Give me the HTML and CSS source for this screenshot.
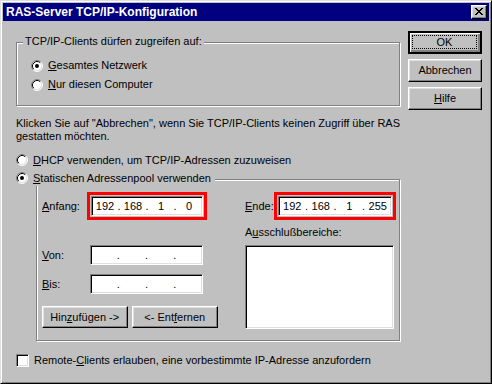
FILE: index.html
```html
<!DOCTYPE html>
<html lang="de">
<head>
<meta charset="utf-8">
<title>RAS-Server TCP/IP-Konfiguration</title>
<link rel="stylesheet" href="styles.css">
</head>
<body>
<div class="window">
  <div class="titlebar">
    <span class="title">RAS-Server TCP/IP-Konfiguration</span>
    <button class="btn close" aria-label="Schließen">
      <svg width="8" height="7" viewBox="0 0 8 7" shape-rendering="crispEdges">
        <path fill="#000" d="M0 0h2v1H0zM6 0h2v1H6zM1 1h2v1H1zM5 1h2v1H5zM2 2h4v1H2zM3 3h2v1H3zM2 4h4v1H2zM1 5h2v1H1zM5 5h2v1H5zM0 6h2v1H0zM6 6h2v1H6z"/>
      </svg>
    </button>
  </div>
  <div class="content">
    <div class="toprow">
      <div class="group group1">
        <span class="legend">TCP/IP-Clients dürfen zugreifen auf:</span>
        <div class="opt">
          <svg class="radio" width="12" height="12" viewBox="0 0 12 12"><circle cx="6" cy="6" r="5" fill="#fff"/><path d="M2.11 9.89A5.5 5.5 0 0 1 9.89 2.11" fill="none" stroke="#808080"/><path d="M9.89 2.11A5.5 5.5 0 0 1 2.11 9.89" fill="none" stroke="#fff"/><path d="M2.82 9.18A4.5 4.5 0 0 1 9.18 2.82" fill="none" stroke="#000"/><path d="M9.18 2.82A4.5 4.5 0 0 1 2.82 9.18" fill="none" stroke="#dfdfdf"/><circle cx="6" cy="6" r="2" fill="#000"/></svg>
          <span><u>G</u>esamtes Netzwerk</span>
        </div>
        <div class="opt">
          <svg class="radio" width="12" height="12" viewBox="0 0 12 12"><circle cx="6" cy="6" r="5" fill="#fff"/><path d="M2.11 9.89A5.5 5.5 0 0 1 9.89 2.11" fill="none" stroke="#808080"/><path d="M9.89 2.11A5.5 5.5 0 0 1 2.11 9.89" fill="none" stroke="#fff"/><path d="M2.82 9.18A4.5 4.5 0 0 1 9.18 2.82" fill="none" stroke="#000"/><path d="M9.18 2.82A4.5 4.5 0 0 1 2.82 9.18" fill="none" stroke="#dfdfdf"/></svg>
          <span><u>N</u>ur diesen Computer</span>
        </div>
      </div>
      <div class="buttons">
        <button class="btn default"><span class="focus">OK</span></button>
        <button class="btn">Abbrechen</button>
        <button class="btn"><u>H</u>ilfe</button>
      </div>
    </div>

    <p class="info">Klicken Sie auf "Abbrechen", wenn Sie TCP/IP-Clients keinen Zugriff über RAS<br>gestatten möchten.</p>

    <div class="opt dhcp">
      <svg class="radio" width="12" height="12" viewBox="0 0 12 12"><circle cx="6" cy="6" r="5" fill="#fff"/><path d="M2.11 9.89A5.5 5.5 0 0 1 9.89 2.11" fill="none" stroke="#808080"/><path d="M9.89 2.11A5.5 5.5 0 0 1 2.11 9.89" fill="none" stroke="#fff"/><path d="M2.82 9.18A4.5 4.5 0 0 1 9.18 2.82" fill="none" stroke="#000"/><path d="M9.18 2.82A4.5 4.5 0 0 1 2.82 9.18" fill="none" stroke="#dfdfdf"/></svg>
      <span><u>D</u>HCP verwenden, um TCP/IP-Adressen zuzuweisen</span>
    </div>

    <div class="group group2">
      <div class="opt legend2">
        <svg class="radio" width="12" height="12" viewBox="0 0 12 12"><circle cx="6" cy="6" r="5" fill="#fff"/><path d="M2.11 9.89A5.5 5.5 0 0 1 9.89 2.11" fill="none" stroke="#808080"/><path d="M9.89 2.11A5.5 5.5 0 0 1 2.11 9.89" fill="none" stroke="#fff"/><path d="M2.82 9.18A4.5 4.5 0 0 1 9.18 2.82" fill="none" stroke="#000"/><path d="M9.18 2.82A4.5 4.5 0 0 1 2.82 9.18" fill="none" stroke="#dfdfdf"/><circle cx="6" cy="6" r="2" fill="#000"/></svg>
        <span><u>S</u>tatischen Adressenpool verwenden</span>
      </div>

      <div class="leftcol">
        <div class="row anfang">
          <span class="lbl lbl-anfang"><u>A</u>nfang:</span>
          <div class="mark">
            <div class="edit ip">
              <span class="seg">192</span><span class="dot">.</span><span class="seg">168</span><span class="dot">.</span><span class="seg">1</span><span class="dot">.</span><span class="seg">0</span>
            </div>
          </div>
        </div>
        <div class="row von">
          <span class="lbl"><u>V</u>on:</span>
          <div class="edit ip wide">
            <span class="seg"></span><span class="dot">.</span><span class="seg"></span><span class="dot">.</span><span class="seg"></span><span class="dot">.</span><span class="seg"></span>
          </div>
        </div>
        <div class="row bis">
          <span class="lbl"><u>B</u>is:</span>
          <div class="edit ip wide">
            <span class="seg"></span><span class="dot">.</span><span class="seg"></span><span class="dot">.</span><span class="seg"></span><span class="dot">.</span><span class="seg"></span>
          </div>
        </div>
        <div class="row actions">
          <button class="btn add">Hin<u>z</u>ufügen -&gt;</button>
          <button class="btn remove">&lt;- Ent<u>f</u>ernen</button>
        </div>
      </div>

      <div class="rightcol">
        <div class="row ende">
          <span class="lbl lbl-ende"><u>E</u>nde:</span>
          <div class="mark mark-ende">
            <div class="edit ip">
              <span class="seg">192</span><span class="dot">.</span><span class="seg">168</span><span class="dot">.</span><span class="seg">1</span><span class="dot">.</span><span class="seg">255</span>
            </div>
          </div>
        </div>
        <div class="listlabel">A<u>u</u>sschlußbereiche:</div>
        <div class="listbox"></div>
      </div>
    </div>

    <div class="opt check">
      <span class="checkbox"></span>
      <span>Remote-<u>C</u>lients erlauben, eine vorbestimmte IP-Adresse anzufordern</span>
    </div>
  </div>
</div>
</body>
</html>
```

FILE: styles.css
```css
* {
  box-sizing: border-box;
}

html,
body {
  margin: 0;
  padding: 0;
  background: #c0c0c0;
}

body {
  font-family: "Liberation Sans", Arial, sans-serif;
  font-size: 11px;
  line-height: 13px;
  color: #000;
}

u {
  text-decoration: underline;
  text-underline-offset: 1px;
}

.window {
  width: 492px;
  height: 384px;
  background: #c0c0c0;
  border: 1px solid;
  border-color: #dfdfdf #000 #000 #dfdfdf;
  box-shadow: inset 1px 1px #fff, inset -1px -1px #808080;
  padding: 2px;
  display: flex;
  flex-direction: column;
}

.titlebar {
  height: 18px;
  background: #000080;
  color: #fff;
  font-size: 12px;
  font-weight: bold;
  display: flex;
  align-items: center;
  justify-content: space-between;
  padding: 0 2px 0 3px;
}

.title {
  white-space: nowrap;
}

.btn {
  font: inherit;
  color: #000;
  background: #c0c0c0;
  border: 1px solid;
  border-color: #fff #000 #000 #fff;
  box-shadow: inset -1px -1px #808080, inset 1px 1px #dfdfdf;
  padding: 0;
  margin: 0;
  display: flex;
  align-items: center;
  justify-content: center;
  white-space: nowrap;
}

.close {
  width: 16px;
  height: 14px;
  padding: 0 1px 1px 0;
}

.close svg {
  display: block;
}

.content {
  flex: 1;
  padding: 10px 0 0 13px;
}

.toprow {
  display: flex;
  align-items: flex-start;
}

.group {
  position: relative;
  border: 1px solid #808080;
  box-shadow: 1px 1px #fff, inset 1px 1px #fff;
}

.group1 {
  margin-top: 11px;
  width: 384px;
  height: 64px;
  padding: 13px 0 0 14px;
}

.legend {
  position: absolute;
  top: -8px;
  left: 6px;
  padding: 0 2px;
  background: #c0c0c0;
  white-space: nowrap;
}

.opt {
  display: flex;
  align-items: center;
  height: 19px;
  white-space: nowrap;
}

.radio {
  flex: none;
  margin-right: 5px;
}

.buttons {
  margin-left: 8px;
  width: 74px;
  display: flex;
  flex-direction: column;
  gap: 5px;
}

.buttons .btn {
  width: 74px;
  height: 23px;
}

.btn.default {
  border: 2px solid;
  border-color: #000;
  box-shadow: inset 1px 1px #fff, inset -1px -1px #808080, inset -2px -2px #808080;
  padding: 2px 3px 3px 2px;
}

.btn.default .focus {
  flex: 1;
  align-self: stretch;
  display: flex;
  align-items: center;
  justify-content: center;
  border: 1px dotted #000;
}

.info {
  margin: 7px 0 0;
  white-space: nowrap;
}

.dhcp {
  margin-top: 8px;
  height: 18px;
}

.group2 {
  margin: 10px 0 0 20px;
  width: 364px;
  height: 162px;
  padding: 12px 0 0 5px;
  display: flex;
}

.legend2 {
  position: absolute;
  top: -10px;
  left: -21px;
  height: 16px;
  padding-right: 4px;
  background: #c0c0c0;
}

.leftcol {
  width: 176px;
  display: flex;
  flex-direction: column;
}

.rightcol {
  margin-left: 27px;
  display: flex;
  flex-direction: column;
}

.row {
  display: flex;
  align-items: center;
}

.anfang,
.ende {
  height: 28px;
}

.lbl {
  width: 48px;
  flex: none;
}

.lbl-anfang {
  width: 45px;
}

.lbl-ende {
  width: 29px;
}

.mark {
  border: 3px solid #f00;
  padding: 1px;
  width: 120px;
  height: 28px;
}

.mark-ende {
  width: 122px;
}

.edit {
  background: #fff;
  border: 1px solid;
  border-color: #808080 #fff #fff #808080;
  box-shadow: inset 1px 1px #000, inset -1px -1px #dfdfdf;
  height: 20px;
}

.ip {
  display: flex;
  align-items: center;
  padding: 0 1px;
  width: 100%;
}

.ip.wide {
  width: 113px;
}

.seg {
  flex: 1;
  text-align: center;
}

.dot {
  width: 4px;
  text-align: center;
}

.von {
  margin-top: 25px;
}

.bis {
  margin-top: 9px;
}

.actions {
  margin-top: 12px;
  gap: 4px;
}

.actions .btn {
  height: 22px;
}

.add {
  width: 86px;
}

.remove {
  width: 87px;
}

.listlabel {
  margin-top: 6px;
  white-space: nowrap;
}

.listbox {
  margin-top: 6px;
  width: 149px;
  height: 84px;
  background: #fff;
  border: 1px solid;
  border-color: #808080 #fff #fff #808080;
  box-shadow: inset 1px 1px #000, inset -1px -1px #dfdfdf;
}

.check {
  margin-top: 11px;
  height: 16px;
}

.checkbox {
  flex: none;
  width: 13px;
  height: 13px;
  margin-right: 5px;
  background: #fff;
  border: 1px solid;
  border-color: #808080 #fff #fff #808080;
  box-shadow: inset 1px 1px #000, inset -1px -1px #dfdfdf;
}
```
